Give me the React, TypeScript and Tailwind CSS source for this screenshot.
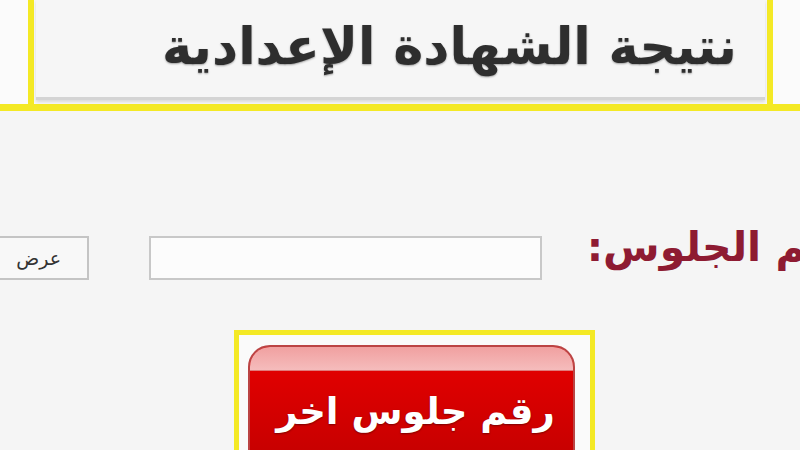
import React from 'react';

export default function App() {
  return (
    <div
      dir="rtl"
      className="relative w-[800px] h-[450px] overflow-hidden bg-[#f5f5f5]"
      style={{ fontFamily: '"DejaVu Sans", sans-serif' }}
    >
      {/* header frame */}
      <div className="h-[111px] border-b-[7px] border-[#f4e925] bg-[#fbfbfb]">
        <div className="mr-[27px] ml-[28px] h-full border-x-[6px] border-[#f4e925] bg-[#f7f7f7] px-[2px]">
          <div className="flex h-[100px] items-center justify-start pr-[28px] pb-[4px] border-b-[3px] border-[#d4d4d4] shadow-[0_2px_3px_rgba(0,0,0,0.12)] bg-[#f6f6f6]">
            <h1 className="text-[51px] font-bold leading-none text-[#2e2e2e] [text-shadow:0_1px_2px_rgba(0,0,0,0.35)]">
              نتيجة الشهادة الإعدادية
            </h1>
          </div>
        </div>
      </div>

      {/* seat number row */}
      <div className="mt-[125px] flex h-[44px] items-center">
        <div className="flex w-[210px] shrink-0 -translate-y-[11px] justify-start">
          <label className="-mr-[58px] shrink-0 whitespace-nowrap text-[41px] font-bold leading-none text-[#8e1b32]">
            رقم الجلوس:
          </label>
        </div>
        <input
          type="text"
          className="mr-[48px] h-[44px] w-[393px] shrink-0 border-2 border-[#c8c8c8] bg-[#fcfcfc] outline-none"
        />
        <button className="mr-[60px] h-[44px] w-[96px] shrink-0 border-2 border-[#c4c4c4] bg-[#f8f8f8] pr-[26px] text-right text-[19px] text-[#333]">
          عرض
        </button>
      </div>

      {/* another seat number button */}
      <div dir="ltr" className="mt-[50px] pl-[234px]">
        <div className="w-[361px] h-[130px] border-[5px] border-b-0 border-[#f4e925] bg-[#fafafa] pl-[9px] pr-[15px] pt-[10px]">
          <div className="h-full rounded-t-[22px] border-2 border-[#b44] bg-[#d70000] overflow-hidden">
            <div className="h-[24px] border-b border-[#e07a7a] bg-gradient-to-b from-[#f0a0a0] to-[#f5bcbc]" />
            <div className="flex h-[80px] items-center justify-center pl-[8px] bg-gradient-to-b from-[#e00000] to-[#c80000]">
              <span dir="rtl" className="text-[37px] font-bold leading-none text-white [text-shadow:0_1px_2px_rgba(0,0,0,0.4)]">
                رقم جلوس اخر
              </span>
            </div>
          </div>
        </div>
      </div>
    </div>
  );
}
